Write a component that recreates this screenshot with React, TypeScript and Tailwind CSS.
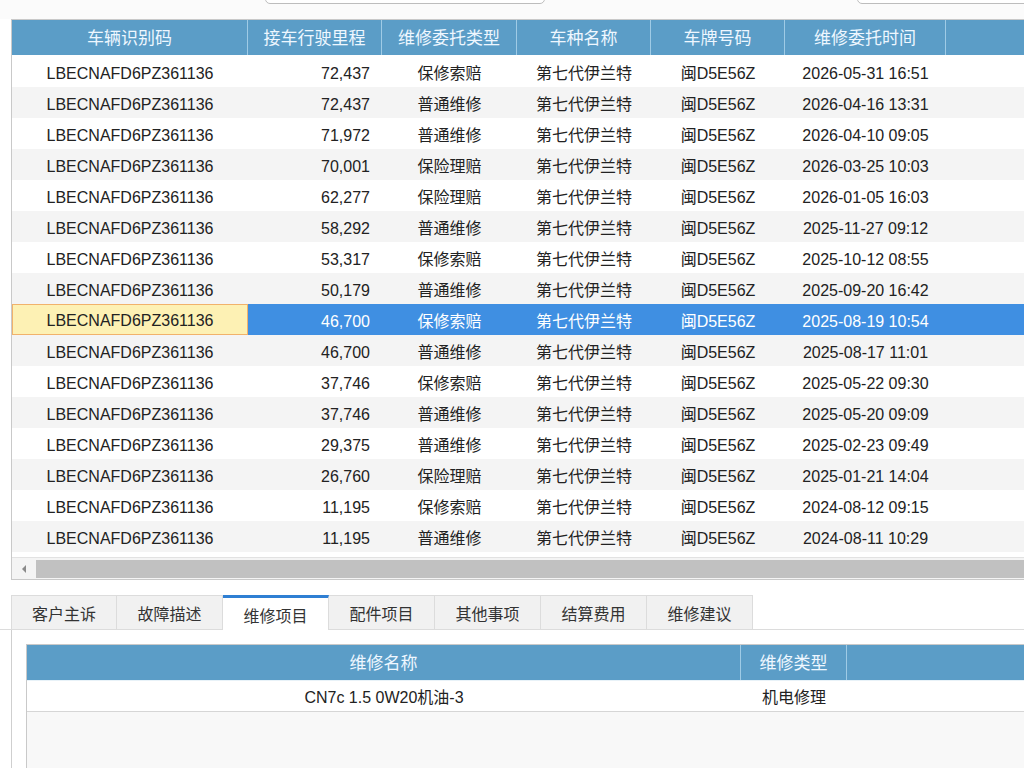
import React from "react";

const rows: [string, string, string][] = [
  ["72,437", "保修索赔", "2026-05-31 16:51"],
  ["72,437", "普通维修", "2026-04-16 13:31"],
  ["71,972", "普通维修", "2026-04-10 09:05"],
  ["70,001", "保险理赔", "2026-03-25 10:03"],
  ["62,277", "保险理赔", "2026-01-05 16:03"],
  ["58,292", "普通维修", "2025-11-27 09:12"],
  ["53,317", "保修索赔", "2025-10-12 08:55"],
  ["50,179", "普通维修", "2025-09-20 16:42"],
  ["46,700", "保修索赔", "2025-08-19 10:54"],
  ["46,700", "普通维修", "2025-08-17 11:01"],
  ["37,746", "保修索赔", "2025-05-22 09:30"],
  ["37,746", "普通维修", "2025-05-20 09:09"],
  ["29,375", "普通维修", "2025-02-23 09:49"],
  ["26,760", "保险理赔", "2025-01-21 14:04"],
  ["11,195", "保修索赔", "2024-08-12 09:15"],
  ["11,195", "普通维修", "2024-08-11 10:29"],
];

const headers = ["车辆识别码", "接车行驶里程", "维修委托类型", "车种名称", "车牌号码", "维修委托时间", ""];
const widths = ["w-[236px]", "w-[134px]", "w-[135px]", "w-[134px]", "w-[134px]", "w-[161px]", "w-[120px]"];
const tabs = ["客户主诉", "故障描述", "维修项目", "配件项目", "其他事项", "结算费用", "维修建议"];

export default function App() {
  return (
    <div className="w-[1024px] h-[768px] overflow-hidden bg-white font-['Liberation_Sans','Noto_Sans_CJK_SC',sans-serif] text-[16px] text-[#222]">
      {/* clipped search bar */}
      <div className="h-[19px] overflow-hidden bg-[#fbfbfb]">
        <div className="mt-[-26px] h-[30px] flex items-end">
          <span className="ml-[186px] w-[74px] h-[30px] shrink-0 whitespace-nowrap overflow-hidden text-[14px] text-[#555] leading-[30px]">车辆识别码：</span>
          <div className="ml-[5px] w-[280px] h-[30px] border border-[#bdbdbd] rounded-[5px] bg-white shrink-0" />
          <span className="ml-[214px] w-[94px] h-[30px] shrink-0 whitespace-nowrap overflow-hidden text-[14px] text-[#555] leading-[30px] text-right">维修委托时间：</span>
          <div className="ml-[4px] w-[200px] h-[30px] border border-[#bdbdbd] rounded-[5px] bg-white shrink-0" />
        </div>
      </div>

      {/* main grid */}
      <div className="ml-[11px] w-[1040px] border border-[#c9c9c9]">
        <div className="flex h-[35px] bg-[#5b9dc7] text-[#eef7ff] text-[17px]">
          {headers.map((h, i) => (
            <div
              key={i}
              className={`${widths[i]} shrink-0 flex items-center justify-center pt-[2px] border-r border-[#9fcbe6]`}
            >
              {h}
            </div>
          ))}
        </div>
        <div className="pt-[1px]">
          {rows.map((r, i) => {
            const sel = i === 8;
            const bg = sel ? "bg-[#3f8fe2] text-white" : i % 2 === 0 ? "bg-white" : "bg-[#f4f4f4]";
            return (
              <div key={i} className={`flex h-[31px] items-center pt-[4px] ${bg}`}>
                <div
                  className={`w-[236px] shrink-0 flex items-center justify-center ${
                    sel ? "bg-[#fdf1b4] text-[#222] border border-[#f1b26b] h-[31px] mt-[-4px] pt-[3px]" : ""
                  }`}
                >
                  LBECNAFD6PZ361136
                </div>
                <div className="w-[134px] shrink-0 text-right pr-[12px]">{r[0]}</div>
                <div className="w-[135px] shrink-0 text-center">{r[1]}</div>
                <div className="w-[134px] shrink-0 text-center">第七代伊兰特</div>
                <div className="w-[134px] shrink-0 text-center">闽D5E56Z</div>
                <div className="w-[161px] shrink-0 text-center">{r[2]}</div>
                <div className="flex-1" />
              </div>
            );
          })}
        </div>
        {/* horizontal scrollbar */}
        <div className="mt-[5px] h-[22px] flex items-center bg-[#f4f4f4] border-t border-[#e2e2e2]">
          <div className="w-[24px] flex items-center justify-center">
            <svg width="6" height="8" viewBox="0 0 6 8">
              <path d="M5 0 L1 4 L5 8 Z" fill="#8a8a8a" />
            </svg>
          </div>
          <div className="flex-1 h-[18px] bg-[#c1c1c1]" />
        </div>
      </div>

      {/* tabs */}
      <div className="mt-[15px] flex h-[35px] border-b border-[#dcdcdc]">
        <div className="w-[11px] shrink-0" />
        {tabs.map((t, i) => {
          const active = i === 2;
          return (
            <div
              key={t}
              className={`w-[106px] shrink-0 flex items-center justify-center text-[16px] text-[#333] border-r border-[#dcdcdc] ${
                active
                  ? "bg-white border-t-[3px] border-t-[#2f7fd3] mb-[-1px] pt-[5px]"
                  : "bg-[#f1f1f1] border-t border-t-[#dcdcdc] pt-[5px]"
              } ${i === 0 ? "border-l border-l-[#dcdcdc]" : ""}`}
            >
              {t}
            </div>
          );
        })}
      </div>

      {/* tab content */}
      <div className="ml-[11px] border-l border-[#cfcfcf] h-[200px] pt-[14px] pl-[14px]">
        <div className="border-l border-t border-[#c9c9c9] w-[1100px]">
          <div className="flex h-[35px] bg-[#5b9dc7] text-[#eef7ff] text-[17px]">
            <div className="w-[714px] shrink-0 flex items-center justify-center pt-[2px] border-r border-[#9fcbe6]">维修名称</div>
            <div className="w-[106px] shrink-0 flex items-center justify-center pt-[2px] border-r border-[#9fcbe6]">维修类型</div>
            <div className="flex-1" />
          </div>
          <div className="flex h-[32px] items-center pt-[4px] bg-white border-b border-[#d6d6d6] border-t border-t-[#e8f2f8]">
            <div className="w-[714px] shrink-0 text-center">CN7c 1.5 0W20机油-3</div>
            <div className="w-[106px] shrink-0 text-center">机电修理</div>
          </div>
          <div className="h-[120px] bg-[#f8f8f8]" />
        </div>
      </div>
    </div>
  );
}
